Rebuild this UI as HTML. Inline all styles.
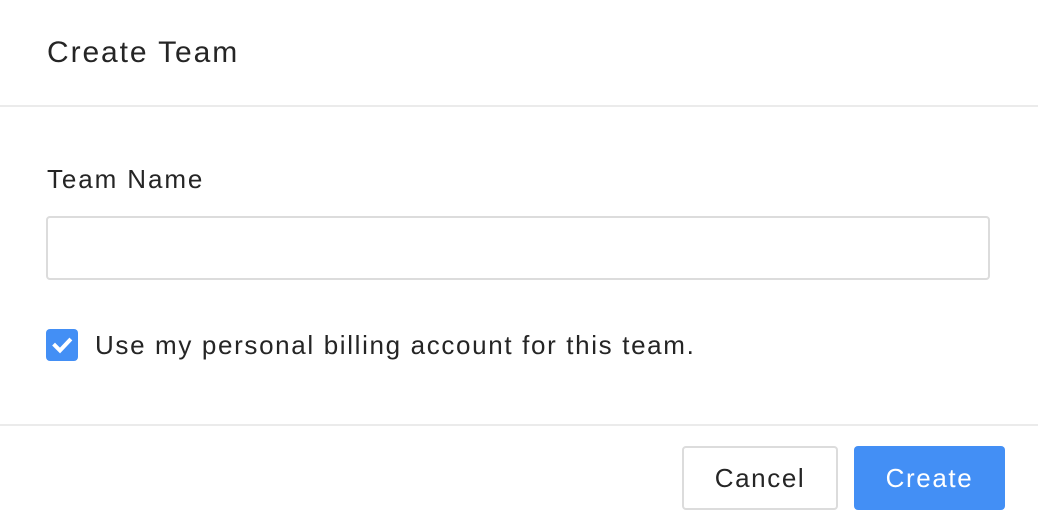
<!DOCTYPE html>
<html><head><style>
body{margin:0;width:1038px;height:530px;background:#fff;font-family:"Liberation Sans",sans-serif;color:#252525;position:relative;overflow:hidden}
.a{position:absolute;white-space:nowrap}
</style></head><body>
<div class="a" style="left:47px;top:35px;font-size:30px;line-height:36px;letter-spacing:1.9px">Create Team</div>
<div class="a" style="left:0;top:105px;width:1038px;height:2px;background:#ebebeb"></div>
<div class="a" style="left:47px;top:164px;font-size:26px;line-height:30px;letter-spacing:1.9px">Team Name</div>
<div class="a" style="left:46px;top:216px;width:940px;height:60px;border:2px solid #dcdcdc;border-radius:4px"></div>
<div class="a" style="left:46px;top:329px;width:32px;height:32px;background:#438ff5;border-radius:4px">
<svg width="32" height="32"><path d="M9 16.5l5 5 9.5-10" stroke="#fff" stroke-width="4" fill="none" stroke-linecap="square"/></svg></div>
<div class="a" style="left:95px;top:328px;font-size:26px;line-height:34px;letter-spacing:1.65px">Use my personal billing account for this team.</div>
<div class="a" style="left:0;top:424px;width:1038px;height:2px;background:#ebebeb"></div>
<div class="a" style="left:682px;top:446px;width:152px;height:60px;border:2px solid #dcdcdc;border-radius:4px;font-size:26px;line-height:60px;text-align:center;letter-spacing:1.6px">Cancel</div>
<div class="a" style="left:854px;top:446px;width:151px;height:64px;background:#438ff5;border-radius:4px;font-size:26px;line-height:64px;text-align:center;color:#fff;letter-spacing:1.6px">Create</div>
</body></html>
